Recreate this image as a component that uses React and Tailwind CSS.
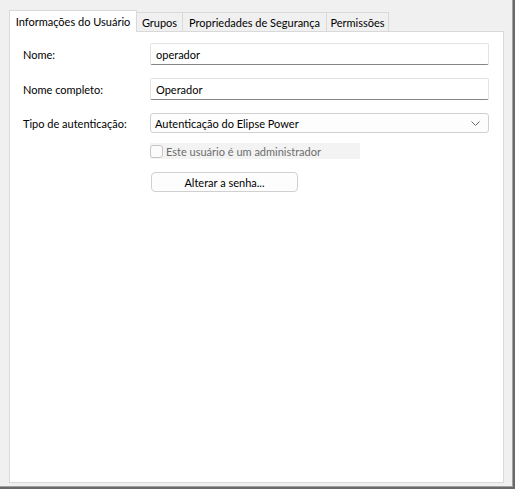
import React from "react";

const font = { fontFamily: 'Lato, "Noto Sans", sans-serif' };

function Chevron() {
  return (
    <svg width="9" height="5" viewBox="0 0 9 5" className="block">
      <path d="M0.5 0.5 L4.5 4.5 L8.5 0.5" fill="none" stroke="#6b6b6b" strokeWidth="1" />
    </svg>
  );
}

export default function App() {
  return (
    <div
      className="w-[515px] h-[489px] bg-[#696969] text-[11px] text-black leading-none whitespace-nowrap"
      style={font}
    >
      <div className="w-[513px] h-[487px] bg-[#a0a0a0]">
        <div className="w-[512px] h-[486px] bg-[#f0f0f0] flex flex-col pl-[9px] pt-[10px]">
          {/* Tabs */}
          <div className="flex items-end h-[21px] relative z-10">
            <div className="w-[128px] h-[22px] bg-white border-t border-l border-r border-[#d9d9d9] flex items-center justify-center pb-[1px] -mb-[1px]">
              Informações do Usuário
            </div>
            <div className="w-[46px] h-[19px] border-t border-r border-[#d9d9d9] flex items-center justify-center">
              Grupos
            </div>
            <div className="w-[144px] h-[19px] border-t border-r border-[#d9d9d9] flex items-center justify-center">
              Propriedades de Segurança
            </div>
            <div className="w-[62px] h-[19px] border-t border-r border-[#d9d9d9] flex items-center justify-center">
              Permissões
            </div>
          </div>
          {/* Panel */}
          <div className="w-[495px] h-[452px] bg-white border border-[#d9d9d9] flex flex-col pl-[13px] pr-[14px] pt-[11px]">
            <div className="flex items-center h-[22px]">
              <div className="w-[127px]">Nome:</div>
              <div className="flex-1 h-[22px] bg-white border border-[#e3e3e3] border-b-[#858585] rounded-[2px] flex items-center pl-[5px]">
                operador
              </div>
            </div>
            <div className="flex items-center h-[22px] mt-[13px]">
              <div className="w-[127px]">Nome completo:</div>
              <div className="flex-1 h-[22px] bg-white border border-[#e3e3e3] border-b-[#858585] rounded-[2px] flex items-center pl-[5px]">
                Operador
              </div>
            </div>
            <div className="flex items-center h-[20px] mt-[13px]">
              <div className="w-[127px]">Tipo de autenticação:</div>
              <div className="flex-1 h-[20px] bg-[#fdfdfd] border border-[#d0d0d0] rounded-[3px] flex items-center pl-[4px] pr-[8px]">
                <span className="flex-1">Autenticação do Elipse Power</span>
                <Chevron />
              </div>
            </div>
            <div className="flex items-center h-[16px] mt-[10px] pl-[127px]">
              <div className="w-[210px] h-[16px] bg-[#f3f3f3] flex items-center text-[#6d6d6d]">
                <div className="w-[13px] h-[13px] border border-[#c5c5c5] rounded-[3px] bg-[#fbfbfb] mr-[3px]" />
                Este usuário é um administrador
              </div>
            </div>
            <div className="flex mt-[13px] pl-[128px]">
              <div className="w-[147px] h-[20px] bg-[#fdfdfd] border border-[#d0d0d0] rounded-[4px] flex items-center justify-center">
                Alterar a senha...
              </div>
            </div>
          </div>
        </div>
      </div>
    </div>
  );
}
